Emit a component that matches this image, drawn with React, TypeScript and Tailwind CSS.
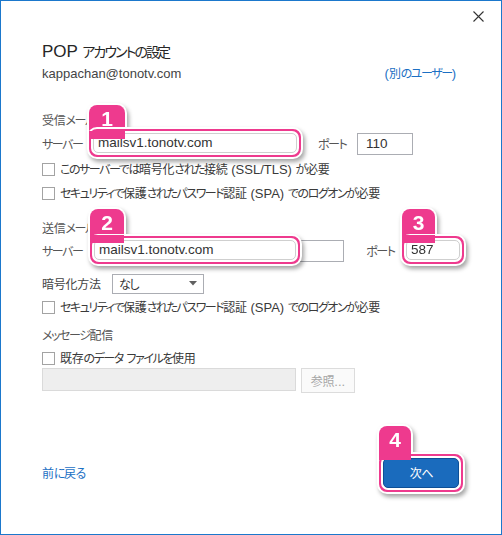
import React from "react";

// ref font (Meiryo UI) has narrow kana, so kana runs get tighter tracking than kanji
function T({ s }: { s: string }) {
  const parts = s.match(/[\x20-\x7e]+|[\u3040-\u30ff]+|[^\x20-\x7e\u3040-\u30ff]+/g) ?? [];
  return (
    <span>
      {parts.map((p, i) => {
        let cls: string;
        if (/^[\x20-\x7e]+$/.test(p)) cls = "text-[13px]";
        else if (/[\u3040-\u30ff]/.test(p)) cls = "text-[12px] tracking-[-0.12em]";
        else cls = "text-[12px] tracking-[-0.02em]";
        return (
          <span key={i} className={cls}>
            {p}
          </span>
        );
      })}
    </span>
  );
}

function Check({ label }: { label: string }) {
  return (
    <div className="flex h-[18px] items-center gap-[5px]">
      <span className="h-[13px] w-[13px] shrink-0 border border-[#a3a3a3] bg-white" />
      <span className="text-[#3a3a3a]">
        <T s={label} />
      </span>
    </div>
  );
}

function Callout({
  n,
  pos,
  tabW,
  boxTop,
  children,
}: {
  n: string;
  pos: string;
  tabW: string;
  boxTop: string;
  children: React.ReactNode;
}) {
  return (
    <div className={`absolute ${pos} [filter:drop-shadow(2px_3px_2px_rgba(0,0,0,0.35))]`}>
      <div className={`absolute left-0 top-0 h-[40px] rounded-t-[10px] border-2 border-b-0 border-white bg-[#ee3a8e] ${tabW}`} />
      <div className={`relative rounded-[10px] border-2 border-white bg-[#ee3a8e] p-[2px] ${boxTop}`}>
        <div className="rounded-[7px] border-2 border-white bg-white">{children}</div>
      </div>
      <div className={`absolute left-0 top-0 flex h-[30px] items-center justify-center ${tabW}`}>
        <div className="absolute bottom-[-6px] left-[2px] right-[2px] h-[8px] bg-[#ee3a8e]" />
        <span className="relative text-[21px] font-bold leading-none text-white">{n}</span>
      </div>
    </div>
  );
}

function Field({ value }: { value: string }) {
  return (
    <div className="flex h-[20px] items-center rounded-[5px] border border-[#cfcfcf] bg-white pl-[4px] text-[13.5px] text-[#333]">
      {value}
    </div>
  );
}

export default function App() {
  return (
    <div className="relative h-[535px] w-[502px] overflow-hidden whitespace-nowrap border border-[#1b78cc] bg-white text-[#444] [font-family:'Liberation_Sans','Noto_Sans_CJK_JP',sans-serif] [font-feature-settings:'palt']">
      <div className="flex h-[31px] items-center justify-end pr-[17px]">
        <svg width="11" height="11" viewBox="0 0 11 11">
          <path d="M0.5 0.5 L10.5 10.5 M10.5 0.5 L0.5 10.5" stroke="#333" strokeWidth="1.1" />
        </svg>
      </div>

      <div className="flex flex-col px-[41px]">
        <div className="mt-[9px] flex h-[22px] items-center text-[#262626]">
          <span>
            <span className="text-[17px]">POP </span>
            <span className="text-[14px] tracking-[-0.14em]">アカウントの</span>
            <span className="text-[14px] tracking-[-0.2em]">設定</span>
          </span>
        </div>

        <div className="mt-[2px] flex h-[18px] items-center justify-between text-[13px]">
          <span className="text-[#444]">kappachan@tonotv.com</span>
          <span className="mr-[4px] text-[#1c70c4]">
            <T s="(別のユーザー)" />
          </span>
        </div>

        <div className="mt-[28px] flex h-[18px] items-center text-[#555]">
          <T s="受信メール" />
        </div>

        <div className="relative mt-[4px] flex h-[22px] items-center">
          <span className="w-[49px] text-[#555]">
            <T s="サーバー" />
          </span>
          <div className="h-[22px] w-[210px] border border-[#abadb3]" />
          <span className="ml-[17px] w-[39px] text-[#555]">
            <T s="ポート" />
          </span>
          <div className="flex h-[22px] w-[56px] items-center border border-[#abadb3] pl-[8px] text-[13.5px] text-[#333]">110</div>
          <Callout n="1" pos="left-[45px] top-[-30px] w-[216px]" tabW="w-[40px]" boxTop="mt-[24px]">
            <Field value="mailsv1.tonotv.com" />
          </Callout>
        </div>

        <div className="mt-[5px]">
          <Check label="このサーバーでは暗号化された接続 (SSL/TLS) が必要" />
        </div>
        <div className="mt-[6px]">
          <Check label="セキュリティで保護されたパスワード認証 (SPA) でのログオンが必要" />
        </div>

        <div className="mt-[17px] flex h-[18px] items-center text-[#555]">
          <T s="送信メール" />
        </div>

        <div className="relative mt-[3px] flex h-[22px] items-center">
          <span className="w-[49px] text-[#555]">
            <T s="サーバー" />
          </span>
          <div className="h-[22px] w-[254px] border border-[#abadb3]" />
          <span className="ml-[22px] w-[38px] text-[#555]">
            <T s="ポート" />
          </span>
          <div className="h-[22px] w-[56px] border border-[#abadb3]" />
          <Callout n="2" pos="left-[46px] top-[-33px] w-[214px]" tabW="w-[38px]" boxTop="mt-[27px]">
            <Field value="mailsv1.tonotv.com" />
          </Callout>
          <Callout n="3" pos="left-[358px] top-[-33px] w-[66px]" tabW="w-[37px]" boxTop="mt-[27px]">
            <Field value="587" />
          </Callout>
        </div>

        <div className="mt-[11px] flex h-[21px] items-center">
          <span className="w-[70px] text-[#444]">
            <T s="暗号化方法" />
          </span>
          <div className="flex h-[20px] w-[92px] items-center justify-between border border-[#abadb3] pl-[6px] pr-[6px] text-[#333]">
            <T s="なし" />
            <svg width="8" height="5" viewBox="0 0 8 5">
              <path d="M0 0 H8 L4 4.5 Z" fill="#606060" />
            </svg>
          </div>
        </div>

        <div className="mt-[4px]">
          <Check label="セキュリティで保護されたパスワード認証 (SPA) でのログオンが必要" />
        </div>

        <div className="mt-[10px] flex h-[18px] items-center text-[#555]">
          <T s="メッセージ配信" />
        </div>

        <div className="mt-[5px]">
          <Check label="既存のデータ ファイルを使用" />
        </div>

        <div className="mt-[1px] flex h-[25px] items-start">
          <div className="h-[23px] w-[254px] border border-[#dadada] bg-[#eeeeee]" />
          <div className="ml-[5px] flex h-[25px] w-[54px] items-center justify-center border border-[#dcdcdc] bg-[#fafafa] text-[#a6a6a6]">
            <T s="参照..." />
          </div>
        </div>

        <div className="mt-[64px] flex h-[31px] items-center justify-between">
          <span className="text-[#1c70c4]">
            <T s="前に戻る" />
          </span>
          <div className="relative h-[31px] w-[78px]">
            <Callout n="4" pos="left-[-5px] top-[-33px] w-[88px]" tabW="w-[36px]" boxTop="mt-[28px]">
              <div className="flex h-[30px] items-center justify-center rounded-[5px] border border-[#0d4f96] bg-[#1a6bbd] text-white">
                <T s="次へ" />
              </div>
            </Callout>
          </div>
        </div>
      </div>
    </div>
  );
}
